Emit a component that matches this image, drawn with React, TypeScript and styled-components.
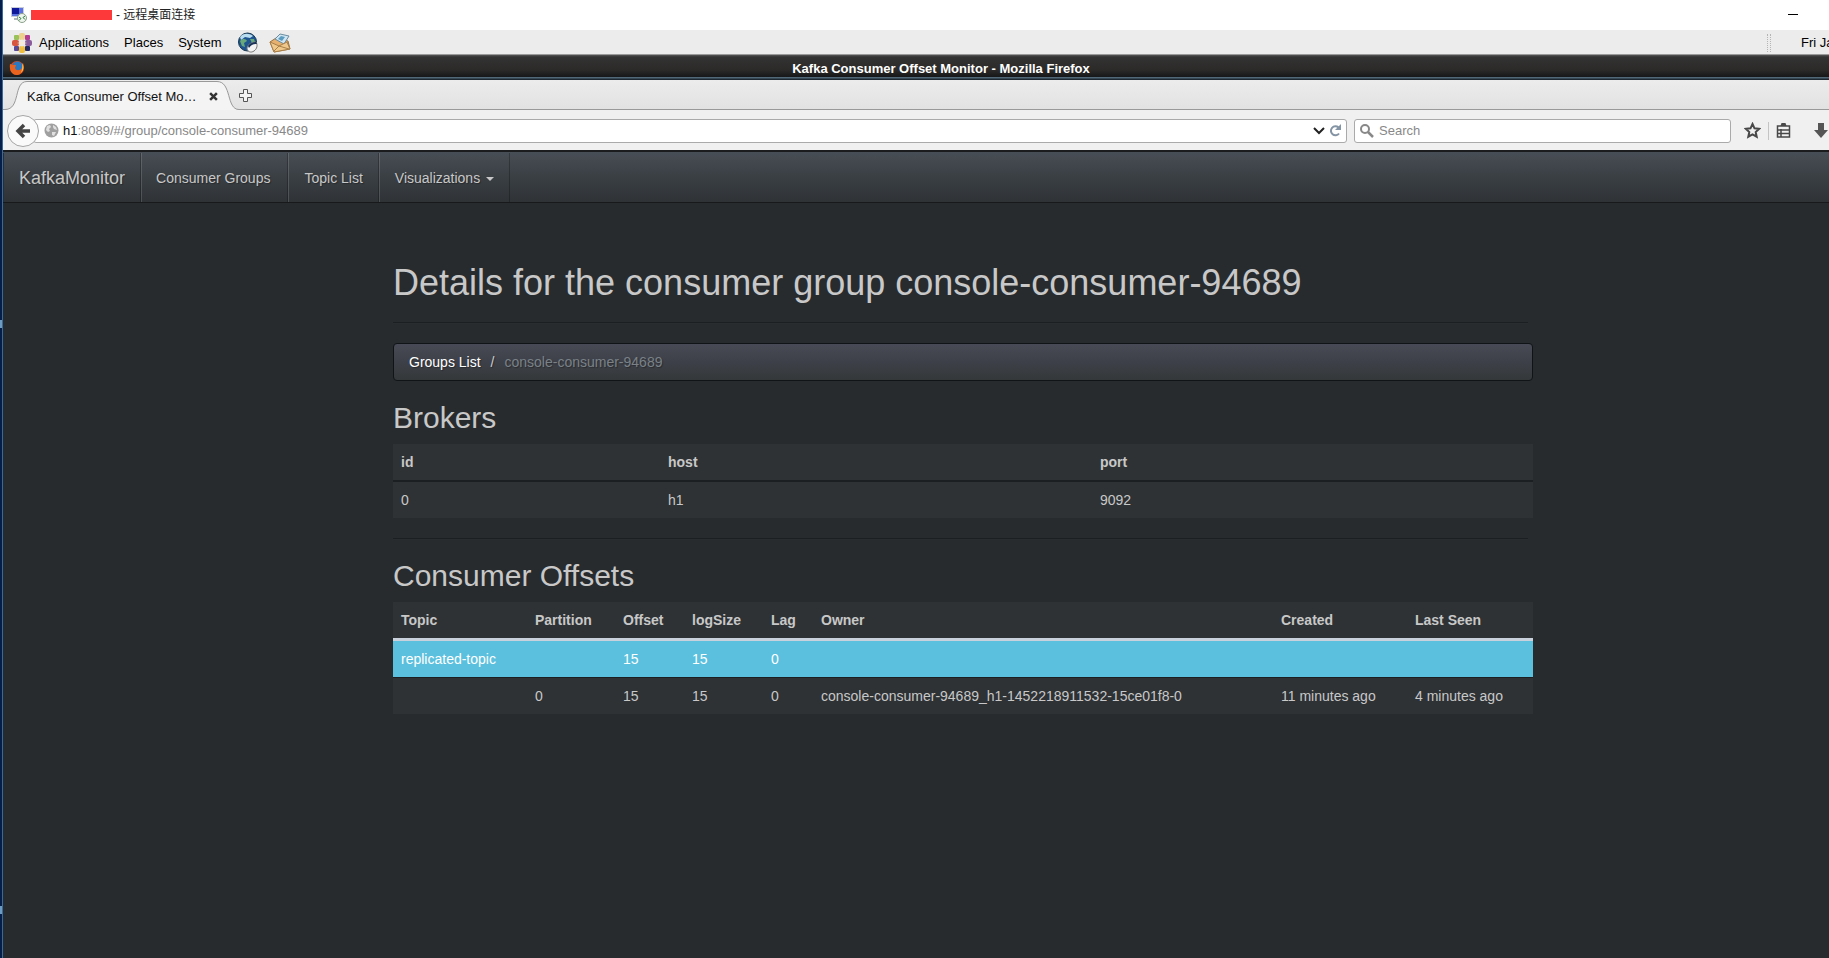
import React from "react";
import styled, { createGlobalStyle, css } from "styled-components";

const Global = createGlobalStyle`
  * { box-sizing: border-box; }
  html, body, #root { height: 100%; }
  body {
    margin: 0;
    overflow: hidden;
    background: #272b2e;
    font-family: "Liberation Sans", Arial, "Noto Sans CJK SC", sans-serif;
    font-size: 14px;
    line-height: 20px;
    color: #c8c8c8;
  }
  button, input { font: inherit; color: inherit; }
`;

const Screen = styled.div`
  display: flex;
  min-height: 100%;
`;

const DesktopEdge = styled.div`
  flex: none;
  width: 3px;
  background: #04204a;
  border-right: 1px solid #3a6a9a;
  display: flex;
  flex-direction: column;
  justify-content: space-between;
  padding: 320px 0 44px;
`;

const EdgeMark = styled.span`
  height: 8px;
  width: 2px;
  background: #6c9cc4;
`;

const Remote = styled.div`
  flex: 1;
  min-width: 0;
  display: flex;
  flex-direction: column;
`;

const RdpBar = styled.header`
  display: flex;
  align-items: center;
  height: 30px;
  padding: 0 30px 0 8px;
  background: #fff;
  color: #222;
  font-size: 12px;
`;

const Redacted = styled.span`
  width: 81px;
  height: 10px;
  margin: 0 4px;
  background: #fd3a39;
`;

const PlainButton = styled.button`
  display: flex;
  align-items: center;
  justify-content: center;
  padding: 0;
  border: 0;
  background: none;
  color: #444;
`;

const Minimise = styled(PlainButton)`
  margin-left: auto;
  width: 12px;
  height: 12px;
`;

const GnomePanel = styled.nav`
  display: flex;
  align-items: center;
  height: 25px;
  padding: 1px 0 0 8px;
  background: #ececec;
  border-bottom: 1px solid #9a9a9a;
  color: #000;
  font-size: 13px;
`;

const PanelMenus = styled.div`
  display: flex;
  gap: 15px;
  margin: 0 16px 0 6px;
`;

const PanelLaunchers = styled.div`
  display: flex;
  gap: 10px;
`;

const PanelButton = styled(PlainButton)`
  color: #000;
`;

const Grip = styled.span`
  width: 4px;
  height: 18px;
  margin-left: auto;
  border-left: 1px dotted #b5b5b5;
  border-right: 1px dotted #b5b5b5;
`;

const Clock = styled.span`
  width: 28px;
  margin-left: 30px;
  white-space: nowrap;
`;

const FirefoxTitle = styled.div`
  display: flex;
  align-items: center;
  height: 25px;
  padding-left: 6px;
  background: linear-gradient(#555 0, #333 2px, #2c2a29 60%, #151719 88%, #506878 90%, #111820 100%);
  color: #fff;
  font-size: 13px;
  font-weight: bold;
`;

const TitleText = styled.span`
  flex: 1;
  padding: 2px 0 0 28px;
  text-align: center;
`;

const TabStrip = styled.div`
  display: flex;
  height: 30px;
  background: linear-gradient(#ececec, #e2e2e2);
  border-bottom: 1px solid #999;
`;

const Tab = styled.div`
  position: relative;
  display: flex;
  align-items: center;
  width: 236px;
  height: 30px;
  padding: 3px 0 0 24px;
  color: #111;
  font-size: 13px;
`;

const TabShape = styled.svg`
  position: absolute;
  left: 0;
  top: 0;
`;

const TabLabel = styled.span`
  position: relative;
  width: 181px;
`;

const TabClose = styled(PlainButton)`
  position: relative;
  width: 10px;
`;

const NewTab = styled(PlainButton)`
  width: 13px;
  padding-top: 2px;
`;

const Toolbar = styled.div`
  display: flex;
  align-items: center;
  height: 42px;
  padding: 1px 0 0 4px;
  background: #f0f0f0;
  border-bottom: 2px solid #1a1c1e;
  overflow: hidden;
`;

const Back = styled.button`
  z-index: 1;
  flex: none;
  display: flex;
  align-items: center;
  justify-content: center;
  width: 32px;
  height: 32px;
  padding: 0;
  border: 1px solid #a5a5a5;
  border-radius: 50%;
  background: #fafafa;
`;

const field = css`
  display: flex;
  align-items: center;
  height: 24px;
  border: 1px solid #aaa;
  border-radius: 3px;
  background: #fff;
  color: #888;
  font-size: 13px;
`;

const AddressBox = styled.div`
  ${field}
  flex: 1;
  margin-left: -6px;
  padding: 0 4px 0 10px;
  gap: 4px;
`;

const Address = styled.div`
  flex: 1;
  strong { font-weight: normal; color: #111; }
`;

const SearchBox = styled.label`
  ${field}
  width: 377px;
  margin-left: 7px;
  padding-left: 5px;
  gap: 5px;
`;

const SearchInput = styled.input`
  flex: 1;
  min-width: 0;
  padding: 0;
  border: 0;
  outline: 0;
  background: none;
  &::placeholder { color: #888; opacity: 1; }
`;

const ToolIcons = styled.div`
  display: flex;
  flex: none;
  align-items: center;
  width: 98px;
  padding-left: 13px;
`;

const Divider = styled.span`
  width: 1px;
  height: 18px;
  margin: 0 7px;
  background: #c4c4c4;
`;

const Downloads = styled(PlainButton)`
  margin-left: 23px;
`;

const Navbar = styled.nav`
  display: flex;
  height: 51px;
  padding-top: 1px;
  background: linear-gradient(#484e55, #3a3f44 50%, #2f3336);
  border-bottom: 1px solid #17191b;
`;

const NavLink = styled.a<{ $brand?: boolean }>`
  display: flex;
  align-items: center;
  padding: 0 15px;
  font-size: ${(p) => (p.$brand ? "18px" : "14px")};
  color: #c8c8c8;
  text-decoration: none;
  text-shadow: 1px 1px 1px rgba(0, 0, 0, 0.3);
  border-left: ${(p) => (p.$brand ? "1px solid #2a2d31" : "1px solid rgba(255, 255, 255, 0.14)")};
  border-right: 1px solid rgba(0, 0, 0, 0.25);
  &:nth-child(2) { padding: 0 17px 0 14px; }
`;

const Caret = styled.span`
  margin: 2px 0 0 6px;
  border: 4px solid transparent;
  border-top-color: #c8c8c8;
  border-bottom: 0;
`;

const Content = styled.main`
  padding-left: 94px;
`;

const Container = styled.div`
  max-width: 1140px;
  margin: 0 auto;
`;

const PageTitle = styled.h1`
  margin: 0;
  padding: 60px 0 19px;
  font-size: 36px;
  line-height: 40px;
  font-weight: normal;
`;

const Rule = styled.hr`
  height: 2px;
  margin: 0 5px 19px 0;
  border: 0;
  border-top: 1px solid #1c1f21;
  border-bottom: 1px solid #2a2d30;
`;

const Breadcrumb = styled.nav`
  display: flex;
  gap: 10px;
  height: 38px;
  margin-bottom: 20px;
  padding: 8px 15px;
  border: 1px solid #111417;
  border-radius: 4px;
  background: linear-gradient(#484b55, #3d4048 50%, #353839);
  text-shadow: 1px 1px 1px rgba(0, 0, 0, 0.3);
  color: #7a8288;
  a { color: #fff; text-decoration: none; }
  i { font-style: normal; color: #ccc; }
`;

const SectionTitle = styled.h2`
  margin: 0 0 10px;
  font-size: 30px;
  line-height: 33px;
  font-weight: normal;
`;

const DataTable = styled.table<{ $light?: boolean }>`
  width: 100%;
  table-layout: fixed;
  margin-bottom: 20px;
  border-collapse: collapse;
  background: #2e3235;
  th, td { padding: 8px; text-align: left; white-space: nowrap; }
  td { border-top: 1px solid #1c1f21; }
  th { border-bottom: ${(p) => (p.$light ? "3px solid #c9d2dc" : "2px solid #1c1f21")}; }
`;

const Column = styled.col<{ $width?: number }>`
  width: ${(p) => (p.$width ? `${p.$width}px` : "auto")};
`;

const TopicRow = styled.tr`
  background: #5bc0de;
  color: #fff;
`;

const offsetColumns: { name: string; width?: number }[] = [
  { name: "Topic", width: 134 },
  { name: "Partition", width: 88 },
  { name: "Offset", width: 69 },
  { name: "logSize", width: 79 },
  { name: "Lag", width: 50 },
  { name: "Owner" },
  { name: "Created", width: 134 },
  { name: "Last Seen", width: 126 },
];

const brokerColumns: { name: string; width?: number }[] = [
  { name: "id", width: 267 },
  { name: "host", width: 432 },
  { name: "port" },
];

const RdpIcon = () => (
  <svg width="16" height="16" viewBox="0 0 16 16" aria-hidden="true">
    <path d="M0 0h13v10H0z" fill="#c8ccd8" />
    <path d="M1 1h11v8H1z" fill="#5a70e0" />
    <path d="M1 1h7v6H1z" fill="#10189a" />
    <path d="M3 11h5v2H3z" fill="#b0b4bc" />
    <circle cx="11" cy="11" r="4.500" fill="#eef4ee" stroke="#8aa08a" />
    <path d="M8 10l2 1.500-2 2M14 9l-2 1.500 2 2" fill="none" stroke="#257a35" />
  </svg>
);

const CentosIcon = () => (
  <svg width="22" height="22" viewBox="0 0 22 22" aria-hidden="true">
    <rect x="8" y="1" width="6" height="7" rx="2" fill="#ecd08c" />
    <rect x="8" y="14" width="6" height="7" rx="2" fill="#efbe3c" />
    <rect x="1" y="8" width="7" height="6" rx="2" fill="#d8563f" />
    <rect x="14" y="8" width="7" height="6" rx="2" fill="#8a5c9a" />
    <rect x="3" y="3" width="5" height="5" rx="1" fill="#9ac25a" />
    <rect x="14" y="3" width="5" height="5" rx="1" fill="#b03c94" />
    <rect x="3" y="14" width="5" height="5" rx="1" fill="#5a4a96" />
    <rect x="14" y="14" width="5" height="5" rx="1" fill="#262a60" />
    <path d="M11 6l1 4 4 1-4 1-1 4-1-4-4-1 4-1z" fill="#f6ecd8" />
  </svg>
);

const GlobeIcon = () => (
  <svg width="22" height="22" viewBox="0 0 22 22" aria-hidden="true">
    <circle cx="10.500" cy="10" r="9" fill="#1f5590" stroke="#183850" />
    <path d="M3 5c3-4 9-4 13-1l-3 2-5-1-4 3z" fill="#b8dcf0" />
    <path d="M3 9c3-3 6-2 7 0l-3 2 1 4-3-1zM13 7l4 0 1 3-3 1z" fill="#69a878" />
    <path d="M10 17c0-4 4-7 9-7 2 3 1 7-2 9-3 2-6 1-7-2z" fill="#f4f4f4" stroke="#777" />
    <path d="M11 14c2-3 5-4 8-4l1 2c-4 0-6 1-8 4z" fill="#1a3358" />
  </svg>
);

const MailIcon = () => (
  <svg width="22" height="20" viewBox="0 0 22 20" aria-hidden="true">
    <path d="M1 9l6-4 12 3 2 8-16 3z" fill="#e5b070" stroke="#98703c" />
    <path d="M6 6l5-5 9 2-5 8z" fill="#cfe6f2" stroke="#6a8ca0" />
    <path d="M9 6l3-3 4 1-3 4z" fill="#5a9cc0" />
    <path d="M1 9l9 4 8-4 3 7-16 3z" fill="#f0c88c" stroke="#a87f48" />
    <path d="M5 18l5-5 10 3" fill="none" stroke="#a87f48" />
  </svg>
);

const FirefoxIcon = () => (
  <svg width="16" height="16" viewBox="0 0 16 16" aria-hidden="true">
    <circle cx="8" cy="8" r="7" fill="#d8481c" />
    <circle cx="8.500" cy="6.500" r="5" fill="#2a78c0" />
    <path d="M1 4c1 0 2 1 3 1l3 0-1 3c1 3 5 3 7 0l1-5c2 5 0 11-6 12C3 15 0 10 1 4z" fill="#ea6420" />
    <path d="M13 3c2 3 2 7-1 10 1-3 2-6 1-10z" fill="#f8d34c" />
  </svg>
);

export default function App() {
  return (
    <>
      <Global />
      <Screen>
        <DesktopEdge><EdgeMark /><EdgeMark /></DesktopEdge>
        <Remote>
          <RdpBar>
            <RdpIcon />
            <Redacted />
            <span>- 远程桌面连接</span>
            <Minimise aria-label="Minimize">
              <svg width="10" height="2"><path d="M0 0h10v1H0z" fill="#000" /></svg>
            </Minimise>
          </RdpBar>
          <GnomePanel>
            <CentosIcon />
            <PanelMenus>
              <PanelButton>Applications</PanelButton>
              <PanelButton>Places</PanelButton>
              <PanelButton>System</PanelButton>
            </PanelMenus>
            <PanelLaunchers>
              <PanelButton aria-label="Web browser"><GlobeIcon /></PanelButton>
              <PanelButton aria-label="Mail"><MailIcon /></PanelButton>
            </PanelLaunchers>
            <Grip />
            <Clock>Fri Ja</Clock>
          </GnomePanel>
          <FirefoxTitle>
            <FirefoxIcon />
            <TitleText>Kafka Consumer Offset Monitor - Mozilla Firefox</TitleText>
          </FirefoxTitle>
          <TabStrip>
            <Tab>
              <TabShape width="240" height="30" viewBox="0 0 240 30" aria-hidden="true">
                <path d="M0 29.500h2c16 0 8-28 22-28h190c15 0 9 28 22 28v.500H0z" fill="#f4f4f4" />
                <path d="M0 29.500h2c16 0 8-28 22-28h190c15 0 9 28 22 28" fill="none" stroke="#999" />
              </TabShape>
              <TabLabel>Kafka Consumer Offset Mo…</TabLabel>
              <TabClose aria-label="Close tab">
                <svg width="9" height="9" viewBox="0 0 8 8"><path d="M1 1l6 6M7 1L1 7" stroke="#333" strokeWidth="2.200" /></svg>
              </TabClose>
            </Tab>
            <NewTab aria-label="New tab">
              <svg width="13" height="13" viewBox="0 0 13 13"><path d="M4.500 .500h4v4h4v4h-4v4h-4v-4h-4v-4h4z" fill="#f4f4f4" stroke="#555" /></svg>
            </NewTab>
          </TabStrip>
          <Toolbar>
            <Back aria-label="Back">
              <svg width="16" height="16" viewBox="0 0 16 16"><path d="M9 2L3 8l6 6M4 8h11" fill="none" stroke="#444" strokeWidth="3.500" /></svg>
            </Back>
            <AddressBox>
              <svg width="15" height="15" viewBox="0 0 15 15" aria-hidden="true">
                <circle cx="7.500" cy="7.500" r="7" fill="#a0a0a0" />
                <path d="M3 3l3-1 1 2-2 2 1 2-2 1-2-2zM9 2l3 2 1 3-3-1-1-2zM8 9l4 0-2 4-2-1z" fill="#e0e0e0" />
              </svg>
              <Address><strong>h1</strong>:8089/#/group/console-consumer-94689</Address>
              <PlainButton aria-label="Show history">
                <svg width="12" height="8" viewBox="0 0 12 8"><path d="M1 1l5 5 5-5" fill="none" stroke="#222" strokeWidth="2" /></svg>
              </PlainButton>
              <PlainButton aria-label="Reload">
                <svg width="13" height="13" viewBox="0 0 13 13"><path d="M9.500 3.500A4.500 4.500 0 1 0 10 9.500" fill="none" stroke="#8494a4" strokeWidth="2" /><path d="M12 0v6H6z" fill="#8494a4" /></svg>
              </PlainButton>
            </AddressBox>
            <SearchBox>
              <svg width="14" height="14" viewBox="0 0 14 14" aria-hidden="true"><circle cx="5" cy="5" r="4" fill="none" stroke="#888" strokeWidth="2" /><path d="M8 8l5 5" stroke="#888" strokeWidth="2.500" /></svg>
              <SearchInput placeholder="Search" aria-label="Search" />
            </SearchBox>
            <ToolIcons>
              <PlainButton aria-label="Bookmark this page">
                <svg width="17" height="17" viewBox="0 0 17 17"><path d="M8.500 2l2 4.300 4.700.500-3.500 3.200 1 4.700-4.200-2.400-4.200 2.400 1-4.700L1.800 6.800l4.700-.500z" fill="none" stroke="#484848" strokeWidth="2" /></svg>
              </PlainButton>
              <Divider />
              <PlainButton aria-label="Bookmarks menu">
                <svg width="15" height="15" viewBox="0 0 14 15"><path d="M1 3h12v11H1zM1 7h12M1 10.500h12M4.500 6v8" fill="none" stroke="#484848" strokeWidth="1.500" /><path d="M4 3l1-3h4l1 3z" fill="#484848" /></svg>
              </PlainButton>
              <Downloads aria-label="Downloads">
                <svg width="14" height="15" viewBox="0 0 14 15"><path d="M4 0h6v7h4l-7 8-7-8h4z" fill="#555" /></svg>
              </Downloads>
            </ToolIcons>
          </Toolbar>
          <Navbar>
            <NavLink href="#/" $brand>KafkaMonitor</NavLink>
            <NavLink href="#/groups">Consumer Groups</NavLink>
            <NavLink href="#/topics">Topic List</NavLink>
            <NavLink href="#/visualizations">Visualizations<Caret /></NavLink>
          </Navbar>
          <Content>
            <Container>
              <PageTitle>Details for the consumer group console-consumer-94689</PageTitle>
              <Rule />
              <Breadcrumb aria-label="Breadcrumb">
                <a href="#/groups">Groups List</a>
                <i>/</i>
                <span>console-consumer-94689</span>
              </Breadcrumb>
              <SectionTitle>Brokers</SectionTitle>
              <DataTable>
                <colgroup>{brokerColumns.map((c) => <Column key={c.name} $width={c.width} />)}</colgroup>
                <thead><tr>{brokerColumns.map((c) => <th key={c.name}>{c.name}</th>)}</tr></thead>
                <tbody><tr><td>0</td><td>h1</td><td>9092</td></tr></tbody>
              </DataTable>
              <Rule />
              <SectionTitle>Consumer Offsets</SectionTitle>
              <DataTable $light>
                <colgroup>{offsetColumns.map((c) => <Column key={c.name} $width={c.width} />)}</colgroup>
                <thead><tr>{offsetColumns.map((c) => <th key={c.name}>{c.name}</th>)}</tr></thead>
                <tbody>
                  <TopicRow><td>replicated-topic</td><td /><td>15</td><td>15</td><td>0</td><td /><td /><td /></TopicRow>
                  <tr><td /><td>0</td><td>15</td><td>15</td><td>0</td><td>console-consumer-94689_h1-1452218911532-15ce01f8-0</td><td>11 minutes ago</td><td>4 minutes ago</td></tr>
                </tbody>
              </DataTable>
            </Container>
          </Content>
        </Remote>
      </Screen>
    </>
  );
}
